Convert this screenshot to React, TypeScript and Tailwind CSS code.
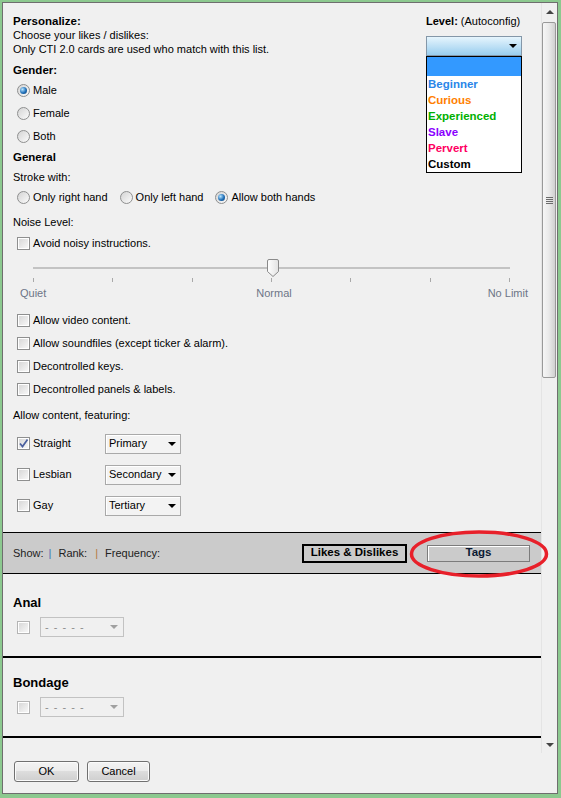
import React from "react";

const levels = [
  { name: "Beginner", color: "text-[#2a86e8]" },
  { name: "Curious", color: "text-[#ff8000]" },
  { name: "Experienced", color: "text-[#00b000]" },
  { name: "Slave", color: "text-[#8a00ff]" },
  { name: "Pervert", color: "text-[#ff0062]" },
  { name: "Custom", color: "text-black" },
];

function Radio({ checked }: { checked?: boolean }) {
  return (
    <span className="flex h-[13px] w-[13px] shrink-0 items-center justify-center rounded-full border border-[#8e8f8f] bg-linear-to-br from-[#d4d4d4] to-[#fbfbfb]">
      {checked && (
        <span className="h-[7px] w-[7px] rounded-full bg-[radial-gradient(circle_at_35%_35%,#b9e6ff,#1f6fb8_55%,#0b3a6b)]" />
      )}
    </span>
  );
}

function Checkbox({ checked, disabled }: { checked?: boolean; disabled?: boolean }) {
  return (
    <span
      className={`relative flex h-[13px] w-[13px] shrink-0 items-center justify-center border bg-white ${
        disabled ? "border-[#b4b4b4]" : "border-[#8e8f8f]"
      }`}
    >
      <span className="h-[9px] w-[9px] bg-linear-to-br from-[#d8d8d8] to-[#f7f7f7]" />
      {checked && (
        <svg className="absolute left-0 top-0" width="11" height="11" viewBox="0 0 11 11">
          <path d="M2 5.5 L4.5 8.5 L9.5 1.5" fill="none" stroke="#4a5f9e" strokeWidth="1.7" />
        </svg>
      )}
    </span>
  );
}

function Arrow({ color = "border-t-black" }: { color?: string }) {
  return <span className={`h-0 w-0 border-x-[4px] border-t-[4px] border-x-transparent ${color}`} />;
}

function Combo({ label }: { label: string }) {
  return (
    <div className="flex h-[20px] w-[76px] items-center justify-between border border-[#a9a9a9] bg-[#f3f3f3] pl-[3px] pr-[4px] shadow-[inset_1px_1px_0_#ffffff]">
      <span>{label}</span>
      <Arrow />
    </div>
  );
}

function DisabledCombo() {
  return (
    <div className="flex h-[20px] w-[84px] items-center justify-between border border-[#c2c2c2] bg-[#f0f0f0] pl-[4px] pr-[5px] text-[#8d8d8d]">
      <span className="tracking-[1px]">- - - - -</span>
      <Arrow color="border-t-[#a0a0a0]" />
    </div>
  );
}

function OptionRow({ label, checked }: { label: string; checked?: boolean }) {
  return (
    <div className="flex h-[23px] items-center gap-[3px] pl-[4px]">
      <Radio checked={checked} />
      <span>{label}</span>
    </div>
  );
}

function CheckRow({ label, checked }: { label: string; checked?: boolean }) {
  return (
    <div className="flex h-[23px] items-center gap-[3px] pl-[4px]">
      <Checkbox checked={checked} />
      <span>{label}</span>
    </div>
  );
}

function LevelPicker() {
  return (
    <div className="relative mr-[19px] w-[96px]">
      <p className="leading-[14px]">
        <span className="font-bold">Level:</span> (Autoconfig)
      </p>
      <div className="mt-[8px] flex h-[20px] items-center justify-end border border-[#8497a8] bg-linear-to-b from-[#e6f5fd] to-[#98cdee] pr-[4px]">
        <Arrow />
      </div>
      <div className="absolute left-0 top-[42px] w-[96px] border border-black bg-white">
        <div className="h-[19px] bg-[#3399ff]" />
        {levels.map((l) => (
          <div key={l.name} className={`h-[16px] pl-[1px] text-[11.5px] font-bold leading-[16px] ${l.color}`}>
            {l.name}
          </div>
        ))}
      </div>
    </div>
  );
}

function NoiseSlider() {
  return (
    <div>
      <div className="relative ml-[20px] h-[31px] w-[477px] pt-[12px]">
        <div className="h-[2px] bg-[#c3c3c3]" />
        <div className="mt-[9px] flex h-[4px] justify-between">
          {[0, 1, 2, 3, 4, 5, 6].map((i) => (
            <span key={i} className="h-[4px] w-px bg-[#a9a9a9]" />
          ))}
        </div>
        <svg className="absolute left-[234px] top-[4px]" width="12" height="18" viewBox="0 0 12 18">
          <defs>
            <linearGradient id="thumb" x1="0" x2="1" y1="0" y2="0">
              <stop offset="0" stopColor="#ffffff" />
              <stop offset="1" stopColor="#e2e2e2" />
            </linearGradient>
          </defs>
          <path d="M0.5 2 Q0.5 0.5 2 0.5 H10 Q11.5 0.5 11.5 2 V12.5 L6 17.5 L0.5 12.5 Z" fill="url(#thumb)" stroke="#8a8a8a" />
        </svg>
      </div>
      <div className="ml-[7px] grid w-[508px] grid-cols-3 leading-[14px] text-[#6d7587]">
        <span>Quiet</span>
        <span className="text-center">Normal</span>
        <span className="text-right">No Limit</span>
      </div>
    </div>
  );
}

function TagSection({ title, top }: { title: string; top: string }) {
  return (
    <div>
      <p className={`${top} pl-[10px] text-[13px] font-bold leading-[16px]`}>{title}</p>
      <div className="mt-[6px] flex h-[20px] items-center gap-[10px] pl-[14px]">
        <Checkbox disabled />
        <DisabledCombo />
      </div>
      <div className="mt-[19px] h-[2px] bg-black" />
    </div>
  );
}

function Scrollbar() {
  return (
    <div className="flex w-[16px] flex-col border-l border-[#e4e4e4] bg-[#f0f0f0]">
      <div className="flex h-[17px] items-center justify-center">
        <span className="h-0 w-0 border-x-[4px] border-b-[4px] border-x-transparent border-b-[#444]" />
      </div>
      <div className="mt-[2px] flex h-[356px] w-[14px] items-center justify-center rounded-[2px] border border-[#999] bg-linear-to-r from-[#f6f6f6] via-[#e9e9e9] to-[#d0d0d0]">
        <div className="flex flex-col gap-[1px]">
          {[0, 1, 2, 3].map((i) => (
            <span key={i} className="h-px w-[7px] bg-[#6b6b6b]" />
          ))}
        </div>
      </div>
      <div className="flex-1" />
      <div className="flex h-[17px] items-center justify-center">
        <Arrow color="border-t-[#444]" />
      </div>
    </div>
  );
}

function Button({ label, width }: { label: string; width: string }) {
  return (
    <button
      className={`h-[21px] ${width} rounded-[3px] border border-[#707070] bg-[linear-gradient(#f3f3f3,#ebebeb_50%,#dddddd_50%,#cfcfcf)] text-[11px] shadow-[inset_0_0_0_1px_#fbfbfb]`}
    >
      {label}
    </button>
  );
}

export default function App() {
  return (
    <div className="h-[798px] w-[561px] bg-[#8cc98f] pb-[4px] pl-[2px] pr-[3px] pt-[2px] font-['Liberation_Sans',Arial,sans-serif] text-[11px] text-black">
      <div className="relative flex h-full flex-col border border-[#6e6e6e] bg-[#f0f0f0]">
        <div className="flex h-[750px]">
          <div className="flex-1 overflow-hidden">
            <div className="pl-[10px] pt-[11px]">
              <div className="flex">
                <div className="flex-1 leading-[14px]">
                  <p className="text-[11.5px] font-bold">Personalize:</p>
                  <p>Choose your likes / dislikes:</p>
                  <p>Only CTI 2.0 cards are used who match with this list.</p>
                </div>
                <LevelPicker />
              </div>

              <p className="mt-[7px] text-[11.5px] font-bold leading-[14px]">Gender:</p>
              <div className="mt-[2px]">
                <OptionRow label="Male" checked />
                <OptionRow label="Female" />
                <OptionRow label="Both" />
              </div>

              <p className="mt-[2px] text-[11.5px] font-bold leading-[14px]">General</p>
              <p className="mt-[6px] leading-[14px]">Stroke with:</p>
              <div className="mt-[2px] flex gap-[8px]">
                <OptionRow label="Only right hand" />
                <OptionRow label="Only left hand" />
                <OptionRow label="Allow both hands" checked />
              </div>

              <p className="mt-[6px] leading-[14px]">Noise Level:</p>
              <div className="mt-[3px]">
                <CheckRow label="Avoid noisy instructions." />
              </div>
              <NoiseSlider />

              <div className="mt-[9px]">
                <CheckRow label="Allow video content." />
                <CheckRow label="Allow soundfiles (except ticker & alarm)." />
                <CheckRow label="Decontrolled keys." />
                <CheckRow label="Decontrolled panels & labels." />
              </div>

              <p className="mt-[7px] leading-[14px]">Allow content, featuring:</p>
              <div className="mt-[6px]">
                {[
                  ["Straight", "Primary", true],
                  ["Lesbian", "Secondary", false],
                  ["Gay", "Tertiary", false],
                ].map(([name, rank, on]) => (
                  <div key={name as string} className="flex h-[31px] items-center pl-[4px]">
                    <div className="flex w-[88px] items-center gap-[3px]">
                      <Checkbox checked={on as boolean} />
                      <span>{name as string}</span>
                    </div>
                    <Combo label={rank as string} />
                  </div>
                ))}
              </div>
            </div>

            <div className="mt-[11px] flex h-[42px] items-center border-y border-black bg-[#cbcbcb] pl-[10px] pr-[11px] text-[#222]">
              <span>Show:</span>
              <span className="ml-[5px] mr-[7px] text-[#3d72b4]">|</span>
              <span>Rank:</span>
              <span className="ml-[8px] mr-[7px] text-[#b47a3c]">|</span>
              <span>Frequency:</span>
              <div className="ml-auto flex h-[19px] w-[105px] items-center justify-center border-2 border-black text-[11.5px] font-bold text-black">
                Likes &amp; Dislikes
              </div>
              <div className="ml-[20px] flex h-[17px] w-[103px] items-center justify-center border border-[#7c7c7c] text-[11.5px] font-bold text-[#0b1a33] shadow-[inset_1px_1px_0_#ffffff]">
                Tags
              </div>
            </div>

            <TagSection title="Anal" top="mt-[21px]" />
            <TagSection title="Bondage" top="mt-[17px]" />
          </div>
          <Scrollbar />
        </div>

        <div className="flex gap-[8px] pl-[11px] pt-[8px]">
          <Button label="OK" width="w-[65px]" />
          <Button label="Cancel" width="w-[63px]" />
        </div>

        <svg className="absolute left-[406px] top-[527px]" width="140" height="48" viewBox="0 0 140 48">
          <ellipse cx="70" cy="24" rx="67.5" ry="22" fill="none" stroke="#e8202a" strokeWidth="3.5" />
        </svg>
      </div>
    </div>
  );
}
